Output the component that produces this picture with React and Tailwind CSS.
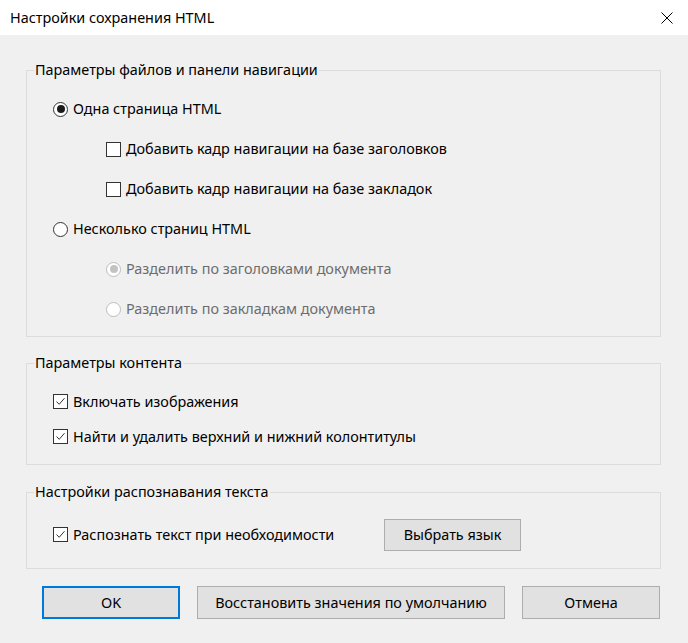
import React from 'react'

const font = { fontFamily: '"Noto Sans", "Liberation Sans", sans-serif' }

function Radio({ checked, disabled }) {
  const ring = disabled ? 'border-[#bcbcbc]' : 'border-[#333333]'
  const dot = disabled ? 'bg-[#c3c3c3]' : 'bg-[#1a1a1a]'
  return (
    <span className={`w-[15px] h-[15px] rounded-full border bg-white flex items-center justify-center shrink-0 ${ring}`}>
      {checked && <span className={`w-[8px] h-[8px] rounded-full ${dot}`} />}
    </span>
  )
}

function Check({ checked }) {
  return (
    <span className="w-[15px] h-[15px] border border-[#333333] bg-white flex items-center justify-center shrink-0">
      {checked && (
        <svg width="11" height="11" viewBox="0 0 11 11">
          <polyline points="1.5,5.5 4.2,8.3 9.5,2.2" fill="none" stroke="#333333" strokeWidth="1" />
        </svg>
      )}
    </span>
  )
}

function Option({ kind, checked, disabled, label, className = '' }) {
  return (
    <div className={`flex items-center gap-[5px] ${className}`}>
      {kind === 'radio' ? <Radio checked={checked} disabled={disabled} /> : <Check checked={checked} />}
      <span className={disabled ? 'text-[#6d6d6d]' : 'text-black'}>{label}</span>
    </div>
  )
}

function Group({ title, className = '', bodyClass = '', children }) {
  return (
    <fieldset className={`mx-[26px] w-[635px] border border-[#dcdcdc] ${className}`}>
      <legend className="ml-[7px] px-[1px] h-[20px] leading-[20px] text-black">{title}</legend>
      <div className={`pl-[26px] ${bodyClass}`}>{children}</div>
    </fieldset>
  )
}

function Button({ children, className = '', primary }) {
  const border = primary ? 'border-2 border-[#0078d7]' : 'border border-[#adadad]'
  return (
    <button className={`bg-[#e1e1e1] flex items-center justify-center text-black ${border} ${className}`}>
      {children}
    </button>
  )
}

export default function App() {
  return (
    <div className="w-[688px] h-[643px] bg-[#f0f0f0] flex flex-col text-[14.4px]" style={font}>
      <div className="h-[35px] bg-white flex items-center justify-between pl-[10px] pr-[15px]">
        <span className="text-black">Настройки сохранения HTML</span>
        <svg width="12" height="12" viewBox="0 0 12 12">
          <path d="M0.5 0.5 L11.5 11.5 M11.5 0.5 L0.5 11.5" stroke="#000" strokeWidth="1" />
        </svg>
      </div>

      <Group title="Параметры файлов и панели навигации" className="mt-[25px]" bodyClass="pt-[9px] pb-[7px]">
        <Option kind="radio" checked label="Одна страница HTML" className="h-[40px]" />
        <Option kind="check" label="Добавить кадр навигации на базе заголовков" className="h-[40px] ml-[53px]" />
        <Option kind="check" label="Добавить кадр навигации на базе закладок" className="h-[40px] ml-[53px]" />
        <Option kind="radio" label="Несколько страниц HTML" className="h-[40px]" />
        <Option kind="radio" checked disabled label="Разделить по заголовками документа" className="h-[40px] ml-[53px]" />
        <Option kind="radio" disabled label="Разделить по закладкам документа" className="h-[40px] ml-[53px]" />
      </Group>

      <Group title="Параметры контента" className="mt-[16px]" bodyClass="pt-[11px] pb-[10px]">
        <Option kind="check" checked label="Включать изображения" className="h-[35px]" />
        <Option kind="check" checked label="Найти и удалить верхний и нижний колонтитулы" className="h-[35px]" />
      </Group>

      <Group title="Настройки распознавания текста" className="mt-[17px]" bodyClass="pt-[17px] pb-[17px]">
        <div className="flex items-center h-[32px]">
          <Option kind="check" checked label="Распознать текст при необходимости" className="w-[331px]" />
          <Button className="w-[137px] h-[32px]">Выбрать язык</Button>
        </div>
      </Group>

      <div className="flex gap-[17px] pl-[42px] mt-[17px]">
        <Button primary className="w-[138px] h-[33px]">OK</Button>
        <Button className="w-[308px] h-[33px]">Восстановить значения по умолчанию</Button>
        <Button className="w-[138px] h-[33px]">Отмена</Button>
      </div>
    </div>
  )
}
